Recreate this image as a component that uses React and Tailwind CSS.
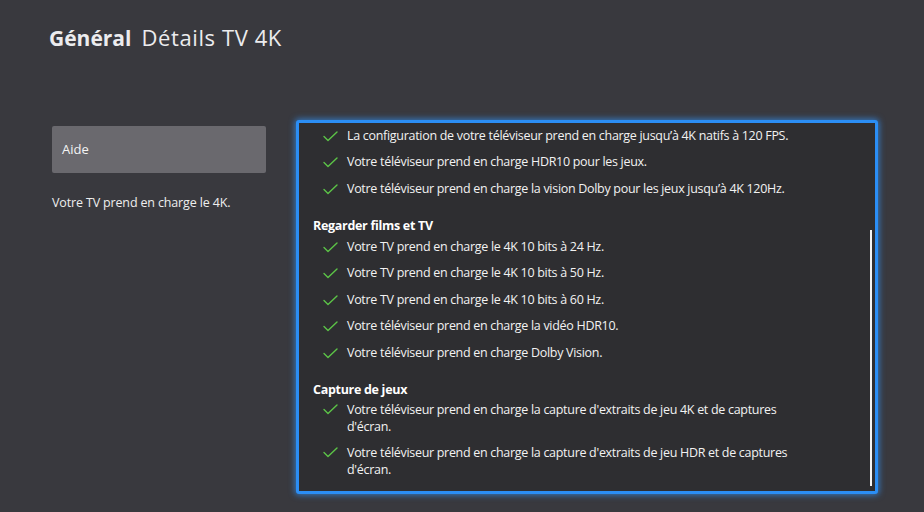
import React from 'react';

const FONT = { fontFamily: '"Open Sans", "Noto Sans", sans-serif' };

const Check = () => (
  <svg width="15" height="11" viewBox="0 0 15 11" fill="none" className="shrink-0">
    <path d="M1 5.5 L5 9.5 L14 1" stroke="#5cc447" strokeWidth="1.4" strokeLinecap="round" strokeLinejoin="round" />
  </svg>
);

const Row = ({ children }) => (
  <div className="flex h-[26.5px] items-center pl-[10px]">
    <Check />
    <span className="ml-[9px] text-[12.5px] tracking-[-0.3px] text-[#f2f2f2]">{children}</span>
  </div>
);

const LongRow = ({ children }) => (
  <div className="flex items-start pl-[10px]">
    <div className="mt-[3px]">
      <Check />
    </div>
    <span className="ml-[9px] w-[465px] text-[12.5px] leading-[17px] tracking-[-0.3px] text-[#f2f2f2]">
      {children}
    </span>
  </div>
);

const Heading = ({ children, className = '' }) => (
  <div className={`h-4 text-[12.5px] font-bold leading-4 tracking-[-0.3px] text-white ${className}`}>
    {children}
  </div>
);

export default function App() {
  return (
    <div
      className="h-[512px] w-[924px] overflow-hidden bg-[#39393e] text-white"
      style={FONT}
    >
      <div className="flex items-baseline pl-[49px] pt-[22px] leading-[30px] text-[#ececee]">
        <span className="text-[21px] font-bold">Général</span>
        <span className="ml-[10px] text-[22px] tracking-[0.6px]">Détails TV 4K</span>
      </div>

      <div className="mt-[67px] flex pl-[52px]">
        <div className="w-[214px] pt-[6px]">
          <div className="flex h-[47px] items-center rounded-[2px] bg-[#6a696e] pl-[10px] text-[13px] text-[#f4f4f4]">
            Aide
          </div>
          <div className="mt-[21px] text-[12.5px] tracking-[-0.15px] text-[#eeeeee]">
            Votre TV prend en charge le 4K.
          </div>
        </div>

        <div className="ml-[30px] h-[374px] w-[582px] rounded-[3px] border-[3px] border-[#2b8ef5] bg-[#2e2e31] shadow-[0_0_6px_1px_rgba(50,150,255,0.7)]">
          <div className="relative h-full overflow-hidden pl-[14px]">
            <div>
              <Row>La configuration de votre téléviseur prend en charge jusqu’à 4K natifs à 120 FPS.</Row>
              <Row>Votre téléviseur prend en charge HDR10 pour les jeux.</Row>
              <Row>Votre téléviseur prend en charge la vision Dolby pour les jeux jusqu’à 4K 120Hz.</Row>

              <Heading className="mt-[15.5px]">Regarder films et TV</Heading>
              <Row>Votre TV prend en charge le 4K 10 bits à 24 Hz.</Row>
              <Row>Votre TV prend en charge le 4K 10 bits à 50 Hz.</Row>
              <Row>Votre TV prend en charge le 4K 10 bits à 60 Hz.</Row>
              <Row>Votre téléviseur prend en charge la vidéo HDR10.</Row>
              <Row>Votre téléviseur prend en charge Dolby Vision.</Row>

              <Heading className="mt-[15px]">Capture de jeux</Heading>
              <div className="mt-[3.5px] flex flex-col gap-[9px]">
                <LongRow>
                  Votre téléviseur prend en charge la capture d'extraits de jeu 4K et de captures d'écran.
                </LongRow>
                <LongRow>
                  Votre téléviseur prend en charge la capture d'extraits de jeu HDR et de captures d'écran.
                </LongRow>
              </div>
            </div>
            <div className="absolute right-[3px] top-[107px] bottom-[5px] w-[2px] bg-[#f4f4f4]" />
          </div>
        </div>
      </div>
    </div>
  );
}
